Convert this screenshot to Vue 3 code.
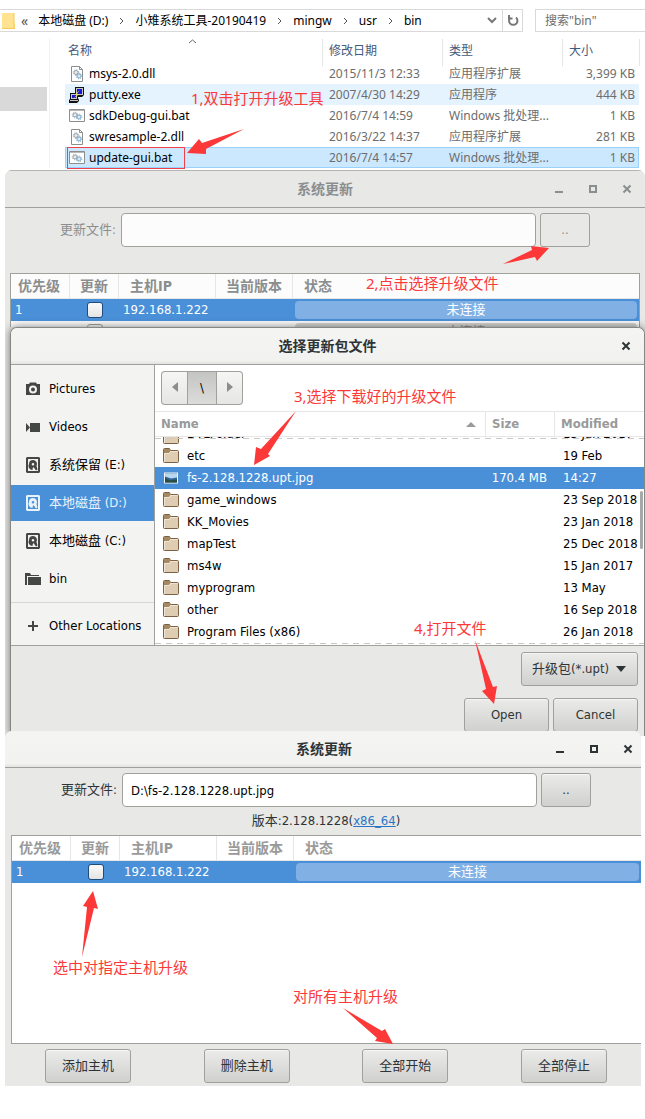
<template>
  <main class="page">
    <section class="explorer">
      <div class="address-row">
        <nav class="address">
          <svg class="folder-yellow" viewBox="0 0 14 18" width="14" height="18">
            <path d="M0 1h12v10h1v5H0z" fill="#ffe391" />
            <path d="M12 1v15M0 16.500h13" stroke="#f2c955" fill="none" />
          </svg>
          <span class="chevrons">«</span>
          <template v-for="(part, i) in path" :key="part">
            <svg v-if="i > 0" class="crumb-sep" viewBox="0 0 5 8" width="5" height="8">
              <path d="M1 1l3 3-3 3" />
            </svg>
            <span>{{ part }}</span>
          </template>
          <button class="address-btn drop" aria-label="history">
            <svg viewBox="0 0 10 7" width="10" height="7"><path d="M1 1l4 4 4-4" /></svg>
          </button>
          <button class="address-btn refresh" aria-label="refresh">
            <svg viewBox="0 0 12 13" width="12" height="13">
              <path d="M9 3.500a4.200 4.200 0 1 1-5.500 0M2 1v3.500h3.500" />
            </svg>
          </button>
        </nav>
        <input class="search" type="text" aria-label="search" placeholder='搜索"bin"' />
      </div>

      <div class="explorer-body">
        <div class="tree"><div class="tree-selected"></div></div>
        <table class="files">
          <thead>
            <tr>
              <th class="col-name">
                名称
                <svg class="sort" viewBox="0 0 9 5" width="9" height="5"><path d="M1 4l3.500-3 3.500 3" /></svg>
              </th>
              <th class="col-date">修改日期</th>
              <th class="col-type">类型</th>
              <th class="col-size">大小</th>
            </tr>
          </thead>
          <tbody>
            <tr v-for="file in files" :key="file.name" :class="file.state">
              <td class="file-name">
                <div class="file-label">
                  <svg v-if="file.icon === 'dll'" viewBox="0 0 16 16" width="16" height="16">
                    <path d="M2.500.5h8l3 3v12h-11z" fill="#fff" stroke="#8d8d8d" />
                    <path d="M10.500.5v3h3" fill="none" stroke="#8d8d8d" />
                    <circle cx="7" cy="6.500" r="2" fill="#e8ecef" stroke="#9aa5ad" />
                    <circle cx="7" cy="6.500" r="2.800" fill="none" stroke="#9aa5ad" stroke-dasharray="1 1.200" />
                    <circle cx="10" cy="10" r="2" fill="#d9ebf7" stroke="#7fabc9" />
                    <circle cx="10" cy="10" r="2.800" fill="none" stroke="#7fabc9" stroke-dasharray="1 1.200" />
                  </svg>
                  <svg v-else-if="file.icon === 'bat'" viewBox="0 0 16 16" width="16" height="16">
                    <path d="M.5 1.500h15v12H.5z" fill="#fff" stroke="#8d8d8d" />
                    <path d="M1 2.500h14" stroke="#b8b8b8" />
                    <circle cx="6" cy="7" r="2" fill="#e8ecef" stroke="#9aa5ad" />
                    <circle cx="6" cy="7" r="2.800" fill="none" stroke="#9aa5ad" stroke-dasharray="1 1.200" />
                    <circle cx="10" cy="9" r="2" fill="#d9ebf7" stroke="#7fabc9" />
                    <circle cx="10" cy="9" r="2.800" fill="none" stroke="#7fabc9" stroke-dasharray="1 1.200" />
                  </svg>
                  <svg v-else viewBox="0 0 16 16" width="16" height="16">
                    <path d="M6 0h9v8l-2 2H6zM1 6h8v5l1 2v1l-2 2H0v-3l1-1z" fill="#111" />
                    <path d="M7 1h7v7H7zM2 7h6v5H2zM1 13h8v1H1z" fill="#c8c8c8" />
                    <path d="M8 2h5v5H8zM3 8h4v3H3z" fill="#1818d8" />
                    <path d="M11 3L6 7.500h2.500L4 11.500l6-4H7.500z" fill="#ffec1c" />
                  </svg>
                  <span>{{ file.name }}</span>
                </div>
                <div v-if="file.state === 'selected'" class="red-frame"></div>
              </td>
              <td>{{ file.date }}</td>
              <td>{{ file.type }}</td>
              <td class="file-size">{{ file.size }}</td>
            </tr>
          </tbody>
        </table>
      </div>
    </section>

    <section class="stage">
      <div class="window inactive">
        <header class="titlebar">
          <h2>系统更新</h2>
          <div class="win-buttons">
            <button v-for="b in winButtons" :key="b.label" :aria-label="b.label">
              <svg viewBox="0 0 12 12" width="12" height="12"><path :d="b.d" /></svg>
            </button>
          </div>
        </header>
        <div class="file-row">
          <label for="old-file">更新文件:</label>
          <input id="old-file" class="entry" type="text" />
          <button class="btn browse">..</button>
        </div>
        <table class="hosts">
          <thead>
            <tr><th v-for="h in hostColumns" :key="h" scope="col">{{ h }}</th></tr>
          </thead>
          <tbody>
            <tr class="active">
              <td>1</td>
              <td class="check"><input type="checkbox" aria-label="更新 192.168.1.222" /></td>
              <td>192.168.1.222</td>
              <td></td>
              <td class="status"><div>未连接</div></td>
            </tr>
            <tr>
              <td></td>
              <td class="check"><input type="checkbox" aria-label="更新" /></td>
              <td></td>
              <td></td>
              <td class="status"><div>未连接</div></td>
            </tr>
          </tbody>
        </table>
      </div>

      <div class="dialog" role="dialog" aria-label="选择更新包文件">
        <header class="titlebar">
          <h2>选择更新包文件</h2>
          <div class="win-buttons">
            <button aria-label="close">
              <svg viewBox="0 0 12 12" width="12" height="12"><path :d="winButtons[2].d" /></svg>
            </button>
          </div>
        </header>

        <div class="chooser">
          <ul class="places">
            <li v-for="place in places" :key="place.name" :class="{ current: place.current, other: place.icon === 'plus' }">
              <svg viewBox="0 0 16 16" width="16" height="16" fill="currentColor">
                <path v-if="place.icon === 'camera'" fill-rule="evenodd" d="M1 3h3l1-1.500h6L12 3h3v11H1zM8 4.500a4 4 0 1 0 0 8 4 4 0 0 0 0-8zm0 2a2 2 0 1 1 0 4 2 2 0 0 1 0-4z" />
                <path v-else-if="place.icon === 'video'" d="M5 4h10v9H5zM1 4l4 4.500L1 13z" />
                <path v-else-if="place.icon === 'folder'" d="M0 2h5l1 2h8v1H2v9H0zM3 6h13v8H3z" />
                <path v-else-if="place.icon === 'plus'" d="M7 3h2v4h4v2H9v4H7V9H3V7h4z" />
                <template v-else>
                  <path fill-rule="evenodd" d="M2 0h12l1 1v14l-1 1H2l-1-1V1zm1 2v12h10V2z" />
                  <path fill-rule="evenodd" d="M8 3a4 4 0 0 1 3.500 6l1 3.500-1.500 1-2.500-3.500q-1 1-1 3A4 4 0 0 1 4 7a4 4 0 0 1 4-4zM8 6a1.300 1.300 0 1 0 0 2.600A1.300 1.300 0 0 0 8 6z" />
                </template>
              </svg>
              <span>{{ place.name }}</span>
            </li>
          </ul>

          <div class="browser">
            <div class="pathbar">
              <button aria-label="back"><svg viewBox="0 0 6 10" width="6" height="10"><path d="M6 0v10L0 5z" /></svg></button>
              <button class="here">\</button>
              <button aria-label="forward"><svg viewBox="0 0 6 10" width="6" height="10"><path d="M0 0v10l6-5z" /></svg></button>
            </div>
            <div class="listing">
              <table>
                <thead>
                  <tr>
                    <th class="l-name">
                      <div>Name <svg viewBox="0 0 10 5" width="10" height="5"><path d="M5 0l5 5H0z" /></svg></div>
                    </th>
                    <th class="l-size">Size</th>
                    <th class="l-mod">Modified</th>
                  </tr>
                </thead>
                <tbody>
                  <tr v-for="row in rows" :key="row.name" :class="{ active: row.active, cut: row.cut }">
                    <td>
                      <div class="cell">
                        <svg v-if="row.active" viewBox="0 0 16 16" width="16" height="16">
                          <path d="M1 2.500h14v11H1z" fill="#f4f4f2" />
                          <path d="M2 3.500h12v9H2z" fill="#2f6697" />
                          <path d="M2 3.500h12v4l-6 1-6-2z" fill="#b9d7ee" />
                          <path d="M2 8l5 2.500 7-1v3H2z" fill="#284c3d" />
                        </svg>
                        <svg v-else viewBox="0 0 16 16" width="16" height="16">
                          <path d="M.5 1.500q0-1 1-1h5l1 2h7q1 0 1 1v10q0 1-1 1h-13q-1 0-1-1z" fill="#dfcdb3" stroke="#7b6245" />
                          <path d="M1 1h5.500l1 2L6 5H1z" fill="#a48963" />
                          <path d="M1.500 14V5.500h5l1-2h7" stroke="#f1e6d5" fill="none" />
                        </svg>
                        <span>{{ row.name }}</span>
                      </div>
                    </td>
                    <td class="l-size"><div class="cell">{{ row.size }}</div></td>
                    <td class="l-mod"><div class="cell">{{ row.modified }}</div></td>
                  </tr>
                </tbody>
              </table>
              <div class="scroll-thumb"></div>
            </div>
          </div>
        </div>

        <footer class="dialog-actions">
          <div class="filter">
            <select class="btn" aria-label="filter"><option>升级包(*.upt)</option></select>
            <svg viewBox="0 0 10 6" width="10" height="6"><path d="M0 0h10L5 6z" fill="#2e3436" /></svg>
          </div>
          <div class="confirm">
            <button class="btn">Open</button>
            <button class="btn">Cancel</button>
          </div>
        </footer>
      </div>
    </section>

    <section class="window front">
      <header class="titlebar">
        <h2>系统更新</h2>
        <div class="win-buttons">
          <button v-for="b in winButtons" :key="b.label" :aria-label="b.label">
            <svg viewBox="0 0 12 12" width="12" height="12"><path :d="b.d" /></svg>
          </button>
        </div>
      </header>
      <div class="file-row">
        <label for="new-file">更新文件:</label>
        <input id="new-file" v-model="updateFile" class="entry" type="text" />
        <button class="btn browse">..</button>
      </div>
      <p class="version">版本:2.128.1228(<a href="#">x86_64</a>)</p>
      <div class="host-area">
        <table class="hosts">
          <thead>
            <tr><th v-for="h in hostColumns" :key="h" scope="col">{{ h }}</th></tr>
          </thead>
          <tbody>
            <tr class="active">
              <td>1</td>
              <td class="check"><input type="checkbox" aria-label="更新 192.168.1.222" /></td>
              <td>192.168.1.222</td>
              <td></td>
              <td class="status"><div>未连接</div></td>
            </tr>
          </tbody>
        </table>
      </div>
      <div class="host-actions">
        <button v-for="a in actions" :key="a" class="btn">{{ a }}</button>
      </div>
    </section>

    <svg class="notes" width="645" height="1119" viewBox="0 0 645 1119">
      <g v-for="note in notes" :key="note.text">
        <text :x="note.x" :y="note.y">{{ note.text }}</text>
        <polygon :points="note.arrow" />
      </g>
    </svg>
  </main>
</template>

<script setup>
import { ref } from 'vue'

const updateFile = ref('D:\\fs-2.128.1228.upt.jpg')

const path = ['本地磁盘 (D:)', '小雉系统工具-20190419', 'mingw', 'usr', 'bin']

const files = [
  { name: 'msys-2.0.dll', icon: 'dll', date: '2015/11/3 12:33', type: '应用程序扩展', size: '3,399 KB' },
  { name: 'putty.exe', icon: 'putty', date: '2007/4/30 14:29', type: '应用程序', size: '444 KB', state: 'hovered' },
  { name: 'sdkDebug-gui.bat', icon: 'bat', date: '2016/7/4 14:59', type: 'Windows 批处理...', size: '1 KB' },
  { name: 'swresample-2.dll', icon: 'dll', date: '2016/3/22 14:37', type: '应用程序扩展', size: '281 KB' },
  { name: 'update-gui.bat', icon: 'bat', date: '2016/7/4 14:57', type: 'Windows 批处理...', size: '1 KB', state: 'selected' }
]

const winButtons = [
  { label: 'minimize', d: 'M2 9h8' },
  { label: 'maximize', d: 'M3 3h6v6H3z' },
  { label: 'close', d: 'M2.500 2.500l7 7M9.500 2.500l-7 7' }
]

const hostColumns = ['优先级', '更新', '主机IP', '当前版本', '状态']
const actions = ['添加主机', '删除主机', '全部开始', '全部停止']

const places = [
  { name: 'Pictures', icon: 'camera' },
  { name: 'Videos', icon: 'video' },
  { name: '系统保留 (E:)', icon: 'disk' },
  { name: '本地磁盘 (D:)', icon: 'disk', current: true },
  { name: '本地磁盘 (C:)', icon: 'disk' },
  { name: 'bin', icon: 'folder' },
  { name: 'Other Locations', icon: 'plus' }
]

const rows = [
  { name: 'DTLFolder', modified: '13 Jan 2017', cut: true },
  { name: 'etc', modified: '19 Feb' },
  { name: 'fs-2.128.1228.upt.jpg', size: '170.4 MB', modified: '14:27', active: true },
  { name: 'game_windows', modified: '23 Sep 2018' },
  { name: 'KK_Movies', modified: '23 Jan 2018' },
  { name: 'mapTest', modified: '25 Dec 2018' },
  { name: 'ms4w', modified: '15 Jan 2017' },
  { name: 'myprogram', modified: '13 May' },
  { name: 'other', modified: '16 Sep 2018' },
  { name: 'Program Files (x86)', modified: '26 Jan 2018' }
]

const notes = [
  { text: '1,双击打开升级工具', x: 191, y: 104, arrow: '187,153 199,139 202,143 244,129 206,149 206,154' },
  { text: '2,点击选择升级文件', x: 366, y: 289, arrow: '549,248 531,246 532,250 503,264 535,257 537,261' },
  { text: '3,选择下载好的升级文件', x: 294, y: 402, arrow: '254,465 256,447 261,449 296,411 268,454 270,456' },
  { text: '4,打开文件', x: 414, y: 634, arrow: '494,704 482,691 486,689 475,640 493,687 497,686' },
  { text: '选中对指定主机升级', x: 53, y: 973, arrow: '93,891 98,909 94,908 82,957 87,907 83,906' },
  { text: '对所有主机升级', x: 293, y: 1002, arrow: '393,1044 375,1041 377,1038 343,1008 382,1031 385,1029' }
]
</script>

<style>
body {
  background: #fff;
}
</style>

<style scoped>
.page {
  position: relative;
  overflow: hidden;
  padding-bottom: 33px;
  font-family: "DejaVu Sans Condensed", "Noto Sans CJK SC", sans-serif;
  font-size: 13px;
  line-height: 20px;
  color: #2e3436;
}

button,
input,
select {
  font: inherit;
  color: inherit;
  box-sizing: border-box;
  margin: 0;
}

button {
  padding: 0;
  cursor: pointer;
}

table {
  border-collapse: separate;
  border-spacing: 0;
  table-layout: fixed;
  width: 100%;
}

th,
td {
  padding: 0;
  text-align: left;
  white-space: nowrap;
}

svg {
  flex-shrink: 0;
}

/* explorer */
.explorer {
  padding-top: 9px;
  font-family: "Noto Sans", "Noto Sans CJK SC", sans-serif;
  font-size: 12px;
  color: #000;
}

.address-row {
  display: flex;
  gap: 12px;
}

.address {
  flex: 1;
  display: flex;
  align-items: center;
  gap: 11px;
  box-sizing: border-box;
  height: 23px;
  padding-left: 2px;
  border: 1px solid #d9d9d9;
  border-left: 0;
  white-space: nowrap;
}

.folder-yellow {
  margin-right: -6px;
}

.chevrons {
  margin-right: -1px;
  color: #555;
  font-size: 14px;
}

.address svg path {
  stroke-width: 1;
}

.crumb-sep path {
  fill: none;
  stroke: #555;
}

.address-btn {
  display: flex;
  align-items: center;
  justify-content: center;
  width: 20px;
  height: 21px;
  border: 0;
  background: none;
}

.address-btn path {
  fill: none;
  stroke: #777;
}

.address-btn svg path {
  stroke-width: 2;
}

.drop {
  margin-left: auto;
  margin-right: -11px;
}

.refresh {
  border-left: 1px solid #d9d9d9;
}

.search {
  width: 110px;
  height: 23px;
  padding: 0 9px;
  border: 1px solid #d9d9d9;
  border-right: 0;
  background: #fff;
}

.search::placeholder {
  color: #6d6d6d;
}

.explorer-body {
  display: flex;
  margin-top: 7px;
  padding-right: 6px;
  padding-bottom: 2px;
}

.tree {
  width: 49px;
  flex-shrink: 0;
  margin-right: 15px;
  border-right: 1px solid #f0f0f0;
}

.tree-selected {
  width: 47px;
  height: 24px;
  margin-top: 48px;
  background: #d9d9d9;
}

.files th {
  position: relative;
  height: 26px;
  padding-left: 7px;
  font-weight: normal;
  color: #44597a;
}

.files thead th {
  height: 24px;
}

.files .col-name {
  padding-left: 3px;
}

.files th::after {
  content: "";
  position: absolute;
  top: 0;
  right: -1px;
  height: 27px;
  border-right: 1px solid #e5e5e5;
}

.col-date,
.col-type {
  width: 113px;
}

.col-size {
  width: 70px;
}

.sort {
  position: absolute;
  top: 0;
  left: 123px;
  fill: none;
  stroke: #666;
}

.files td {
  height: 21px;
  padding-left: 7px;
  line-height: 21px;
  color: #6d6d6d;
}

.files .file-name {
  position: relative;
  padding-left: 4px;
  color: #000;
}

.file-label {
  display: flex;
  align-items: center;
  gap: 4px;
  height: 21px;
}

.files .file-size {
  padding-right: 4px;
  text-align: right;
}

.hovered {
  background: #e5f3ff;
}

.selected {
  background: #cce8ff;
  outline: 1px solid #99d1ff;
  outline-offset: -1px;
}

.red-frame {
  position: absolute;
  top: 0;
  left: 2px;
  width: 116px;
  height: 20px;
  border: 1px solid #f04048;
}

/* gtk windows */
.stage {
  overflow: hidden;
  margin-left: 5px;
  border-radius: 7px 7px 0 0;
  background: #e8e8e7;
}

.window {
  background: #e8e8e7;
}

.inactive {
  height: 157px;
  overflow: hidden;
  box-sizing: border-box;
  border-top: 1px solid #b4b4b2;
  color: #8b8e8f;
}

.titlebar {
  display: grid;
  grid-template-columns: 1fr auto 1fr;
  align-items: center;
  box-sizing: border-box;
  height: 37px;
  padding: 0 6px;
  border-bottom: 1px solid #a0a09c;
}

.titlebar h2 {
  grid-column: 2;
  margin: 0;
  font-size: 14px;
  font-weight: bold;
}

.win-buttons {
  display: flex;
  justify-content: flex-end;
  gap: 10px;
}

.win-buttons button {
  display: flex;
  align-items: center;
  justify-content: center;
  width: 24px;
  height: 24px;
  border: 0;
  background: none;
}

.win-buttons path {
  fill: none;
  stroke: currentColor;
  stroke-width: 2;
}

.file-row {
  display: flex;
  align-items: center;
  gap: 4px;
  padding: 5px 55px 0 55px;
}

.file-row label {
  margin-right: 1px;
}

.entry {
  flex: 1;
  min-width: 0;
  height: 34px;
  padding: 0 8px;
  border: 1px solid #a1a19b;
  border-radius: 4px;
  background: #fcfcfc;
}

.btn {
  height: 34px;
  border: 1px solid #a1a19b;
  border-radius: 3px;
  background: linear-gradient(#ebebea, #d0d0ce);
  box-shadow: inset 0 1px #f6f6f5;
}

.browse {
  width: 50px;
}

.inactive .browse {
  background: #e8e8e7;
  box-shadow: none;
}

.hosts {
  background: #fff;
}

.inactive .hosts {
  width: calc(100% - 10px);
  margin: 26px 5px 0;
  border: 1px solid #a0a09c;
  background: #fcfcfc;
}

.hosts th {
  height: 24px;
  border-right: 1px solid #e6e6e6;
  border-bottom: 1px solid #e6e6e6;
  font-size: 14px;
  font-weight: bold;
  color: #999a99;
  text-align: center;
}

.inactive .hosts th {
  color: #8b8e8f;
}

.hosts th:nth-child(1) {
  width: 56px;
  padding-right: 2px;
}

.hosts th:nth-child(2) {
  width: 48px;
}

.hosts th:nth-child(3) {
  width: 85px;
  padding-left: 11px;
  text-align: left;
}

.hosts th:nth-child(4) {
  width: 76px;
}

.hosts th:nth-child(5) {
  padding-left: 11px;
  border-right: 0;
  text-align: left;
}

.hosts td {
  height: 22px;
  padding: 0 4px;
}

.hosts .active {
  background: #4a90d9;
  color: #fff;
}

.hosts .check {
  padding: 0;
  text-align: center;
}

.check input {
  appearance: none;
  display: block;
  width: 16px;
  height: 16px;
  margin: 0 auto;
  border: 1px solid #a1a19b;
  border-radius: 3px;
  background: linear-gradient(#fafafa, #e4e4e3);
}

.active .check input {
  border-color: #1f4c7c;
}

.hosts .status {
  padding: 0 2px;
}

.status div {
  height: 18px;
  border-radius: 4px;
  background: #d6d6d4;
  line-height: 18px;
  text-align: center;
}

.active .status div {
  background: #81b0e4;
}

/* file chooser */
.dialog {
  margin-left: 5px;
  border: 1px solid #868684;
  border-bottom: 0;
  border-radius: 7px 7px 0 0;
  background: #e8e8e7;
  box-shadow: 0 0 8px rgba(0, 0, 0, 0.5);
  position: relative;
  overflow: hidden;
}

.dialog .titlebar,
.front .titlebar {
  background: linear-gradient(#f4f4f3, #f2f2f1 90%, #e2e2e1);
}

.chooser {
  display: flex;
  border-bottom: 1px solid #a0a09c;
  background: #fff;
  color: #000;
}

.places {
  flex: 0 0 143px;
  display: flex;
  flex-direction: column;
  gap: 2px;
  margin: 0;
  padding: 6px 0 1px;
  border-right: 1px solid #a0a09c;
  background: #f3f3f2;
  list-style: none;
}

.places li {
  display: flex;
  align-items: center;
  gap: 8px;
  height: 36px;
  padding-left: 14px;
}

.places svg {
  color: #454745;
}

.places .current,
.places .current svg {
  background: #4a90d9;
  color: #e9f1fa;
}

.places .other {
  margin-top: 3px;
  padding-top: 5px;
  border-top: 1px solid #d6d6d4;
}

.browser {
  flex: 1;
  min-width: 0;
}

.pathbar {
  display: flex;
  padding: 6px;
}

.pathbar button {
  box-sizing: border-box;
  width: 26px;
  height: 34px;
  border: 1px solid #a1a19b;
  background: linear-gradient(#f6f6f5, #e6e6e5);
}

.pathbar button:first-child {
  border-right: 0;
  border-radius: 4px 0 0 4px;
}

.pathbar button:last-child {
  border-left: 0;
  border-radius: 0 4px 4px 0;
}

.pathbar .here {
  width: 30px;
  background: linear-gradient(#c4c4c2, #dcdcda);
}

.pathbar path {
  fill: #8b8e8b;
}

.listing {
  position: relative;
  height: 234px;
}

.listing::before,
.listing::after {
  content: "";
  position: absolute;
  left: 0;
  right: 0;
  bottom: 1px;
  height: 1px;
  background: repeating-linear-gradient(90deg, #c8c8c6 0 6px, transparent 6px 11px);
}

.listing::before {
  top: 27px;
  bottom: auto;
}

.listing th {
  height: 24px;
  padding-left: 6px;
  border-top: 1px solid #e6e6e6;
  border-bottom: 1px solid #e6e6e6;
  border-right: 1px solid #e6e6e6;
  font-weight: bold;
  color: #999a99;
}

.listing th:last-child {
  border-right: 0;
}

.listing th div {
  display: flex;
  align-items: center;
  justify-content: space-between;
  padding-right: 9px;
}

.listing th path {
  fill: #999a99;
}

th.l-size {
  width: 62px;
}

th.l-mod {
  width: 83px;
}

.listing td {
  height: 22px;
  line-height: 22px;
}

.cell {
  display: flex;
  align-items: center;
  height: 22px;
  padding-left: 8px;
  gap: 8px;
}

.l-size .cell {
  justify-content: flex-end;
  padding-right: 8px;
}

.cut .cell {
  height: 8px;
  align-items: flex-end;
  overflow: hidden;
}

.cut td {
  height: 8px;
}

.listing .active {
  background: #4a90d9;
  color: #fff;
}

.scroll-thumb {
  position: absolute;
  top: 80px;
  right: 1px;
  width: 3px;
  height: 58px;
  border-radius: 2px;
  background: #a5a7a8;
}

.dialog-actions {
  display: flex;
  flex-direction: column;
  align-items: flex-end;
  gap: 12px;
  padding: 6px 6px 4px;
}

.filter {
  position: relative;
  width: 117px;
}

.filter .btn {
  appearance: none;
  display: block;
  width: 100%;
  padding: 0 10px;
}

.filter svg {
  position: absolute;
  top: 14px;
  right: 12px;
  pointer-events: none;
}

.confirm {
  display: flex;
  gap: 4px;
}

.confirm .btn {
  width: 85px;
}

/* bottom window */
.front {
  position: relative;
  margin: -5px 4px 0 5px;
  border-radius: 7px 7px 0 0;
}

.front .titlebar {
  padding: 0 1px 0 3px;
  border-radius: 7px 7px 0 0;
}

.front .file-row {
  padding-right: 50px;
  padding-left: 56px;
}

.front .entry {
  background: #fff;
  color: #000;
}

.version {
  margin: 4px 0;
  padding-left: 6px;
  text-align: center;
}

.version a {
  color: #2a76c6;
}

.host-area {
  min-height: 207px;
  margin-left: 6px;
  border: 1px solid #a0a09c;
  border-right: 0;
  background: #fff;
}

.host-actions {
  display: flex;
  justify-content: space-between;
  padding: 5px 34px 3px 40px;
}

.host-actions .btn {
  width: 86px;
}

.notes {
  position: absolute;
  top: 0;
  left: 0;
  pointer-events: none;
  fill: #fc3838;
  font-family: "Noto Sans", "Noto Sans CJK SC", sans-serif;
  font-size: 15px;
}
</style>
